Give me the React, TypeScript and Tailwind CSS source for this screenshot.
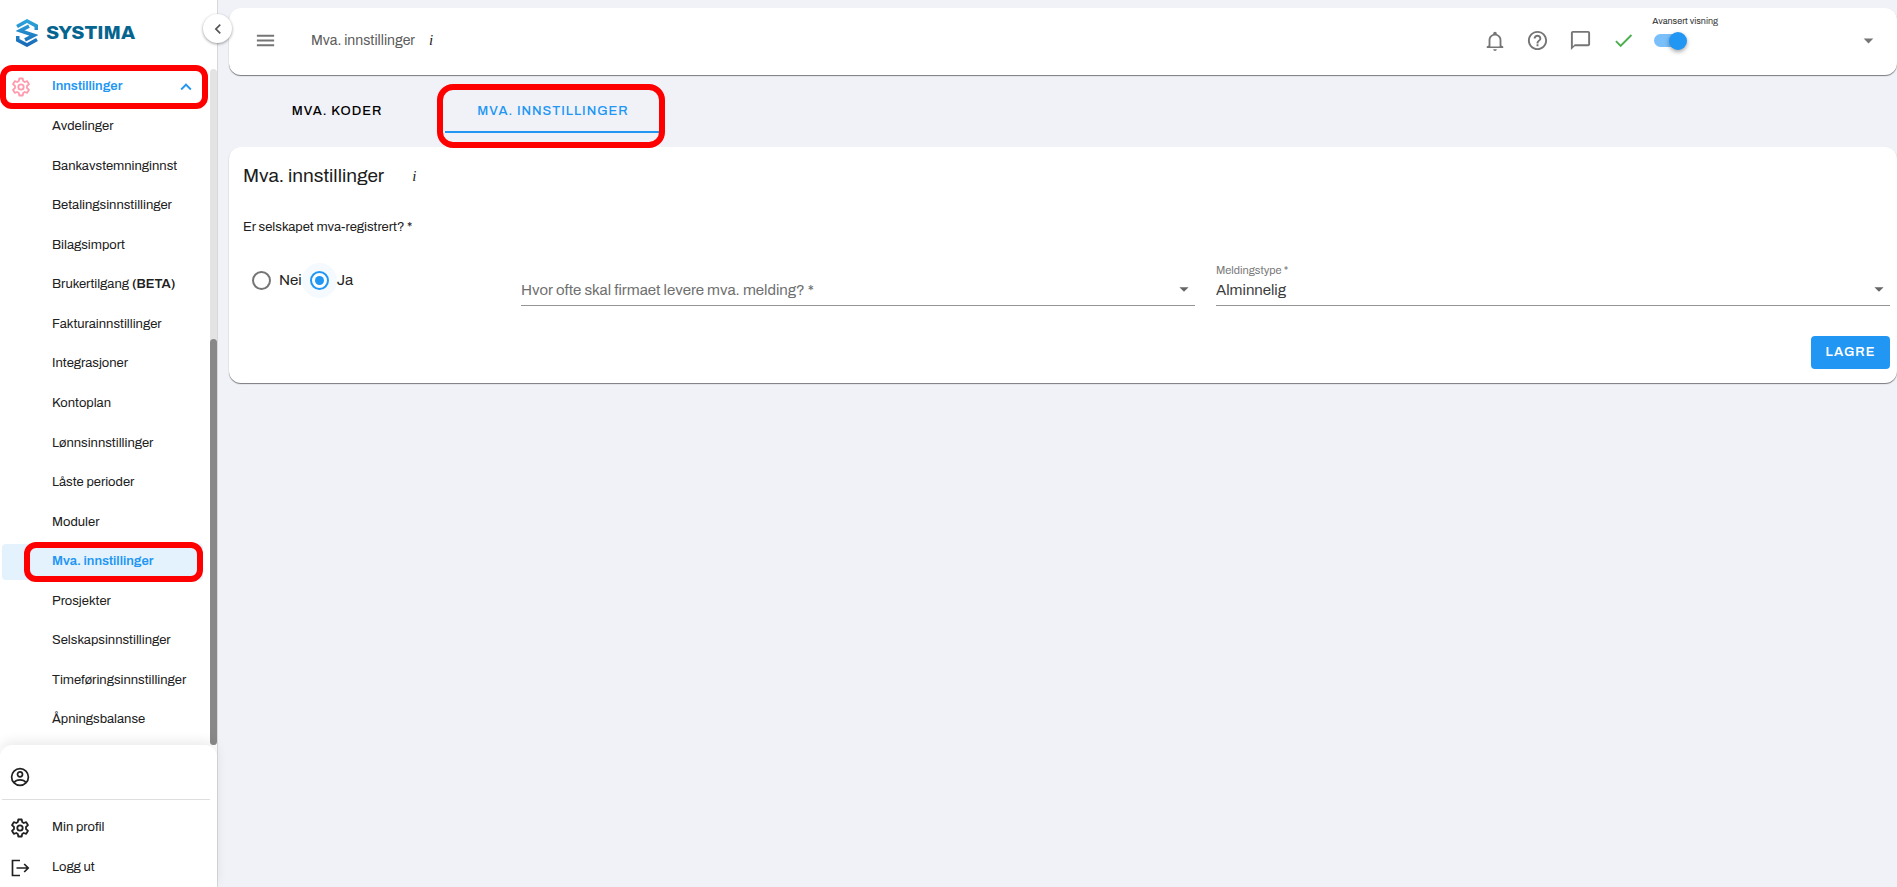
import React, { useState } from "react";
import {
  MdCheck,
  MdArrowDropDown,
  MdChatBubbleOutline,
  MdHelpOutline,
  MdMenu,
  MdChevronLeft,
  MdKeyboardArrowUp,
} from "react-icons/md";

const menu: { label: string; bold?: string }[] = [
  { label: "Avdelinger" },
  { label: "Bankavstemninginnst" },
  { label: "Betalingsinnstillinger" },
  { label: "Bilagsimport" },
  { label: "Brukertilgang", bold: "(BETA)" },
  { label: "Fakturainnstillinger" },
  { label: "Integrasjoner" },
  { label: "Kontoplan" },
  { label: "Lønnsinnstillinger" },
  { label: "Låste perioder" },
  { label: "Moduler" },
  { label: "Mva. innstillinger" },
  { label: "Prosjekter" },
  { label: "Selskapsinnstillinger" },
  { label: "Timeføringsinnstillinger" },
  { label: "Åpningsbalanse" },
];

function CogIcon() {
  return (
    <svg viewBox="0 0 20 20" className="size-5 shrink-0" fill="none" stroke="currentColor" strokeWidth="1.8" strokeLinejoin="round">
      <circle cx="10" cy="10" r="2.7" />
      <path d="M8.300 1.500h3.400l.5 2.600 1.500.9 2.500-.9 1.800 3.100-2 1.800v2l2 1.800-1.800 3.100-2.500-.9-1.500.9-.5 2.600H8.300l-.5-2.600-1.500-.9-2.500.9-1.800-3.100 2-1.800V9l-2-1.800 1.800-3.100 2.500.9 1.500-.9z" />
    </svg>
  );
}

function UserIcon() {
  return (
    <svg viewBox="0 0 20 20" className="size-5 shrink-0" fill="none" stroke="currentColor" strokeWidth="1.7">
      <circle cx="10" cy="10" r="8.4" />
      <circle cx="10" cy="7.3" r="2.5" />
      <path d="M4 15.600c1.500-2 3.600-2.700 6-2.700s4.500.7 6 2.700" />
    </svg>
  );
}

function LogoutIcon() {
  return (
    <svg viewBox="0 0 20 20" className="size-5 shrink-0" fill="none" stroke="currentColor" strokeWidth="1.7">
      <path d="M10 2.500H2.500v15H10M6.500 10H18M14.200 6l4 4-4 4" />
    </svg>
  );
}

function BellIcon() {
  return (
    <svg viewBox="0 0 24 24" className="size-[22px]" fill="currentColor">
      <path d="M10 21h4a2 2 0 0 1-4 0M21 18v1.700H3V18l2-1v-6c0-3.100 2-5.800 5-6.700V4a2 2 0 1 1 4 0v.3c3 .9 5 3.600 5 6.700v6l2 1m-4-7a5 5 0 0 0-10 0v7h10v-7z" />
    </svg>
  );
}

function Logo() {
  return (
    <a href="#" aria-label="Systima" className="flex items-center gap-2 text-[#05658f]">
      <svg viewBox="0 0 22 28" className="h-7 w-[22px]" fill="none" strokeWidth="3.6">
        <defs>
          <linearGradient id="mark" x1="0" y1="0" x2="0" y2="28" gradientUnits="userSpaceOnUse">
            <stop offset="0" stopColor="#2fa8dc" />
            <stop offset="1" stopColor="#1766b5" />
          </linearGradient>
        </defs>
        <g stroke="url(#mark)">
          <path d="M1 7.500 11 2 20.300 7V11" />
          <path d="M21 20.500 11 26 1.700 21V17" />
          <path d="M13 7.200 4 11.700 18 16.300 9 20.800" />
        </g>
      </svg>
      <span className="text-[19px] leading-7 font-extrabold">SYSTIMA</span>
    </a>
  );
}

function SelectField({ id, label, value }: { id: string; label: string; value?: string }) {
  return (
    <div className="relative h-12 min-w-0 flex-1 border-b border-[#949494]">
      <label
        htmlFor={id}
        className={
          value
            ? "absolute top-0.5 left-0 text-[11px] leading-5 text-[#7a7a7a]"
            : "pointer-events-none absolute top-[22px] left-0 text-[15px] leading-5 text-[#6f6f6f]"
        }
      >
        {label}
      </label>
      <select
        id={id}
        defaultValue={value ?? ""}
        className="mt-[22px] h-5 w-full appearance-none bg-transparent text-[15px] leading-5 text-[#3c3c3c] outline-none"
      >
        {value ? <option>{value}</option> : <option value="" aria-label={label} />}
      </select>
      <MdArrowDropDown className="pointer-events-none absolute right-0 bottom-[5px] size-[22px] text-[#666]" />
    </div>
  );
}

function Radio({ label, checked, onChange }: { label: string; checked: boolean; onChange: () => void }) {
  return (
    <label className="flex items-center gap-2 text-[15px] leading-5 text-[#1f1f1f]">
      <input
        type="radio"
        name="registered"
        checked={checked}
        onChange={onChange}
        className="size-[19px] appearance-none rounded-full border-2 border-[#757575] checked:border-[#2196f3] checked:bg-[#2196f3] checked:[background-clip:content-box] checked:p-[3px] checked:shadow-[0_0_0_8px_#f4faff]"
      />
      {label}
    </label>
  );
}

export default function App() {
  const [registered, setRegistered] = useState(true);
  const [advanced, setAdvanced] = useState(true);

  return (
    <div className="flex h-screen overflow-hidden bg-[#f0f2f8] font-['Archivo','Liberation_Sans',Arial,sans-serif] text-[#212121]">
      <aside className="relative flex w-[218px] shrink-0 flex-col border-r border-[#d8d8dc] bg-white">
        <div className="flex h-[65px] shrink-0 items-center pl-4">
          <Logo />
        </div>
        <button
          type="button"
          aria-label="Skjul meny"
          className="absolute top-3.5 -right-[15px] z-10 flex size-[29px] items-center justify-center rounded-full bg-white text-[#555] shadow-[0_1px_3px_rgba(0,0,0,0.4)]"
        >
          <MdChevronLeft className="size-5" />
        </button>

        <div className="flex min-h-0 flex-1">
          <nav className="flex min-w-0 flex-1 flex-col">
            <button
              type="button"
              className="flex h-11 w-[208px] shrink-0 items-center rounded-xl border-[6px] border-[#ff0000] pr-[5px] pl-[5px] text-[13px] font-semibold text-[#2196f3]"
            >
              <span className="text-[#ff9aad]">
                <CogIcon />
              </span>
              <span className="ml-[21px] flex-1 text-left">Innstillinger</span>
              <MdKeyboardArrowUp className="size-[22px]" />
            </button>
            <ul className="flex flex-1 flex-col justify-between pr-[7px] pb-[7px] pl-0.5 text-[13px]">
              {menu.map((m) => {
                const active = m.label === "Mva. innstillinger";
                return (
                  <li key={m.label}>
                    <a
                      href="#"
                      className={
                        active
                          ? "relative flex h-9 items-center rounded bg-[#e3f2fd] pl-[50px] font-semibold text-[#2196f3]"
                          : "flex h-9 items-center pl-[50px]"
                      }
                    >
                      {m.label}
                      {m.bold && <b className="ml-[3px] font-semibold">{m.bold}</b>}
                      {active && (
                        <span className="absolute -top-0.5 right-0 -bottom-0.5 left-[22px] rounded-xl border-[6px] border-[#ff0000]" />
                      )}
                    </a>
                  </li>
                );
              })}
            </ul>
          </nav>
          <div className="mt-1 flex w-[7px] flex-col justify-end rounded bg-[#e3e3e3]">
            <div className="h-3/5 rounded bg-[#888]" />
          </div>
        </div>

        <div className="shrink-0 rounded-t-xl bg-white pr-[7px] pl-0.5 text-[13px] shadow-[0_-4px_12px_rgba(0,0,0,0.08)]">
          <a href="#" aria-label="Bruker" className="flex h-[55px] items-center border-b border-[#dedede] pt-2.5 pl-2">
            <UserIcon />
          </a>
          <a href="#" className="mt-2 flex h-10 items-center gap-[22px] pl-2">
            <CogIcon />
            Min profil
          </a>
          <a href="#" className="flex h-[39px] items-center gap-[22px] pl-2">
            <LogoutIcon />
            Logg ut
          </a>
        </div>
      </aside>

      <main className="min-w-0 flex-1 pt-2 pl-[11px]">
        <header className="flex h-[67px] items-center rounded-xl bg-white pb-0.5 shadow-[0_1px_1px_rgba(0,0,0,0.5)]">
          <button type="button" aria-label="Meny" className="ml-[25px] text-[#757575]">
            <MdMenu className="size-[23px]" />
          </button>
          <h1 className="ml-[34px] text-sm text-[#5c5c5c]">Mva. innstillinger</h1>
          <i className="ml-3.5 font-['Liberation_Serif',serif] text-[15px] text-[#222]">i</i>
          <div className="ml-auto flex items-center text-[#757575]">
            <div className="flex items-center gap-5">
              <button type="button" aria-label="Varsler">
                <BellIcon />
              </button>
              <button type="button" aria-label="Hjelp">
                <MdHelpOutline className="size-[23px]" />
              </button>
              <button type="button" aria-label="Meldinger">
                <MdChatBubbleOutline className="size-[23px]" />
              </button>
              <button type="button" aria-label="Status" className="text-[#4caf50]">
                <MdCheck className="size-[23px]" />
              </button>
            </div>
            <label className="ml-[17px] flex flex-col pb-5 text-[#333]">
              <span className="text-[9px] leading-5">Avansert visning</span>
              <span className="relative mt-px h-[18px] w-[35px]">
                <input
                  type="checkbox"
                  role="switch"
                  checked={advanced}
                  onChange={() => setAdvanced(!advanced)}
                  className="absolute top-0.5 left-0.5 h-[13px] w-[30px] appearance-none rounded-full bg-[#bbb] checked:bg-[#7abff9]"
                />
                <span
                  className={
                    advanced
                      ? "pointer-events-none absolute top-0 right-0 size-[18px] rounded-full bg-[#2196f3] shadow-[0_2px_4px_rgba(0,0,0,0.35)]"
                      : "pointer-events-none absolute top-0 left-0 size-[18px] rounded-full bg-white shadow-[0_2px_4px_rgba(0,0,0,0.35)]"
                  }
                />
              </span>
            </label>
            <button type="button" aria-label="Velg selskap" className="mr-[17px] ml-[139px]">
              <MdArrowDropDown className="size-[23px]" />
            </button>
          </div>
        </header>

        <div role="tablist" className="flex h-[72px] items-start pt-2.5 text-[13px] font-medium tracking-[1px]">
          <button type="button" role="tab" aria-selected="false" className="h-12 w-[216px] pt-1.5 text-black">
            MVA. KODER
          </button>
          <div className="relative">
            <button
              type="button"
              role="tab"
              aria-selected="true"
              className="h-12 w-[216px] border-b-2 border-[#2196f3] pt-2 text-[#2196f3]"
            >
              MVA. INNSTILLINGER
            </button>
            <span className="pointer-events-none absolute -top-px -right-1 -bottom-[15px] -left-2 z-10 rounded-2xl border-[6px] border-[#ff0000]" />
          </div>
        </div>

        <section className="rounded-xl bg-white pt-[17px] pr-[7px] pb-3.5 pl-3.5 shadow-[0_1px_1px_rgba(0,0,0,0.5)]">
          <div className="flex h-6 items-center">
            <h2 className="text-[19px] leading-6 text-[#1c1c1c]">Mva. innstillinger</h2>
            <i className="ml-7 font-['Liberation_Serif',serif] text-[15px] text-[#222]">i</i>
          </div>
          <p className="mt-[29px] text-[13px] leading-5">Er selskapet mva-registrert? *</p>
          <div className="mt-[21px] flex items-start">
            <fieldset className="mt-3 flex w-[278px] shrink-0 gap-2 pl-[9px]">
              <Radio label="Nei" checked={!registered} onChange={() => setRegistered(false)} />
              <Radio label="Ja" checked={registered} onChange={() => setRegistered(true)} />
            </fieldset>
            <div className="flex min-w-0 flex-1 gap-[21px]">
              <SelectField id="freq" label="Hvor ofte skal firmaet levere mva. melding? *" />
              <SelectField id="type" label="Meldingstype *" value="Alminnelig" />
            </div>
          </div>
          <div className="mt-[30px] flex justify-end">
            <button type="button" className="h-[33px] w-[79px] rounded bg-[#2196f3] text-[13px] font-semibold tracking-[1px] text-white">
              LAGRE
            </button>
          </div>
        </section>
      </main>
    </div>
  );
}
